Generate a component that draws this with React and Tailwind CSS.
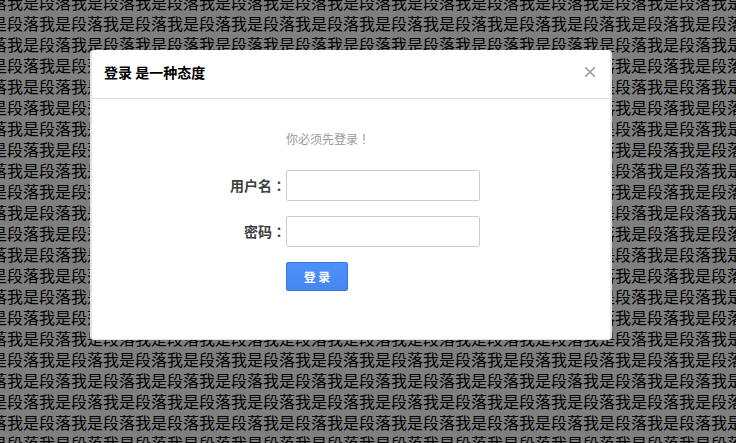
import { useState } from "react";

const PHRASE = "我是段落";
const ROWS = 60;

function Paragraphs() {
  const text = PHRASE.repeat(50);

  return (
    <div className="-mt-2 -ml-[9px] text-base leading-[21px] whitespace-nowrap text-black">
      {Array.from({ length: ROWS }, (_, i) => (
        <p key={i}>{i % 2 === 0 ? text.slice(3) : text.slice(1)}</p>
      ))}
    </div>
  );
}

// full-width punctuation centred in its box
function Mark({ children }) {
  return <span className="font-['Noto_Sans_CJK_TC',sans-serif]">{children}</span>;
}

function Field({ id, label, type, value, onChange }) {
  return (
    <div className="mb-[15px] flex items-center">
      <label htmlFor={id} className="w-[194px] shrink-0 pb-0.5 text-right text-sm font-bold text-[#404040]">
        {label}
        <Mark>：</Mark>
      </label>
      <input
        id={id}
        name={id}
        type={type}
        value={value}
        onChange={onChange}
        className="h-[31px] w-[194px] min-w-0 rounded-[2px] border border-[#cccccc] bg-white px-2 text-sm outline-none focus:border-[#4d90fe]"
      />
    </div>
  );
}

export default function App() {
  const [open, setOpen] = useState(true);
  const [formData, setFormData] = useState({ username: "", password: "" });

  const handleChange = (e) => {
    const { name, value } = e.target;
    setFormData({ ...formData, [name]: value });
  };

  const handleSubmit = (e) => {
    e.preventDefault();
    setOpen(false);
  };

  return (
    <div className="relative h-screen overflow-hidden bg-white font-['Noto_Sans_CJK_SC',sans-serif]">
      <Paragraphs />

      {open && (
        <div className="fixed inset-0 flex items-start justify-center bg-black/50 pt-[50px] pr-[34px]">
          <div
            role="dialog"
            aria-labelledby="login-title"
            className="w-full max-w-[522px] rounded border-x-2 border-b border-[#e5e5e5] bg-white"
          >
            <div className="flex h-[49px] items-center justify-between border-b border-[#dddddd] px-3 pb-1">
              <h3 id="login-title" className="text-sm font-bold text-black">
                登录 是一种态度
              </h3>
              <button type="button" aria-label="关闭" onClick={() => setOpen(false)} className="p-0.5">
                <svg width="12" height="12" viewBox="0 0 12 12" fill="none" stroke="#999999" strokeWidth="1.6">
                  <path d="M1.2 1.2 L10.8 10.8 M10.8 1.2 L1.2 10.8" />
                </svg>
              </button>
            </div>

            <form onSubmit={handleSubmit} className="pt-[30px] pb-[33px]">
              <p className="mb-[21px] ml-[194px] text-xs leading-5 text-[#999999]">
                你必须先登录<Mark>！</Mark>
              </p>
              <Field id="username" label="用户名" type="text" value={formData.username} onChange={handleChange} />
              <Field id="password" label="密码" type="password" value={formData.password} onChange={handleChange} />
              <button
                type="submit"
                className="mb-[15px] ml-[194px] block h-[29px] w-[62px] rounded-[2px] border border-[#3079ed] bg-linear-to-b from-[#4d90fe] to-[#4787ed] text-xs font-bold text-white"
              >
                登 录
              </button>
            </form>
          </div>
        </div>
      )}
    </div>
  );
}
